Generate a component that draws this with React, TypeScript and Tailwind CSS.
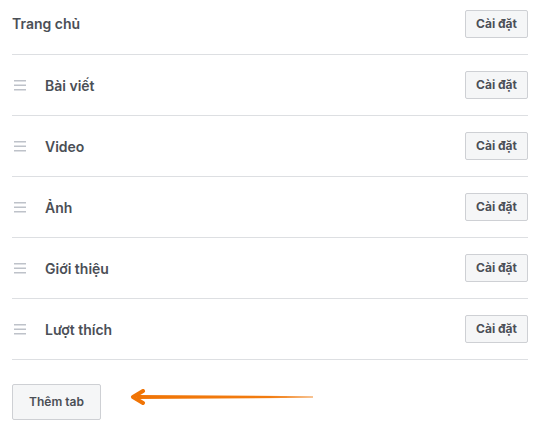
import React from "react";

// Tab list row with a settings button on the right
interface TabRowProps {
  label: string;
  draggable?: boolean;
  first?: boolean;
}

const DragHandle: React.FC = () => (
  <svg width="12" height="11" viewBox="0 0 12 11" className="shrink-0">
    <rect x="0" y="0" width="12" height="1.5" fill="#bec2c9" />
    <rect x="0" y="4.5" width="12" height="1.5" fill="#bec2c9" />
    <rect x="0" y="9" width="12" height="1.5" fill="#bec2c9" />
  </svg>
);

const TabRow: React.FC<TabRowProps> = ({ label, draggable = true, first }) => (
  <div
    className={`flex items-center justify-between border-b border-[#dddfe2] ${
      first ? "h-[55px] pb-[7px]" : "h-[61px]"
    }`}
  >
    <div className="flex items-center">
      {draggable && (
        <span className="ml-[2px] mr-[19px] flex">
          <DragHandle />
        </span>
      )}
      <span className="text-[14px] font-semibold text-[#4b4f56]">{label}</span>
    </div>
    <button className="h-[28px] w-[63px] rounded-[2px] border border-[#ced0d4] bg-[#f5f6f7] text-[12px] font-bold text-[#4b4f56]">
      Cài đặt
    </button>
  </div>
);

const tabs = ["Bài viết", "Video", "Ảnh", "Giới thiệu", "Lượt thích"];

export default function App() {
  return (
    <div
      className="h-[428px] w-[540px] overflow-hidden bg-white pl-[12px] pr-[12px]"
      style={{ fontFamily: "Inter, Arial, sans-serif" }}
    >
      <TabRow label="Trang chủ" draggable={false} first />
      {tabs.map((t) => (
        <TabRow key={t} label={t} />
      ))}
      <div className="mt-[24px] flex items-start">
        <button className="h-[36px] w-[89px] rounded-[2px] border border-[#ced0d4] bg-[#f5f6f7] text-[12px] font-semibold text-[#4b4f56]">
          Thêm tab
        </button>
        <svg width="190" height="16" viewBox="0 0 190 16" className="ml-[28px] mt-[5px]">
          <defs>
            <linearGradient id="shaft" x1="0" x2="1" y1="0" y2="0">
              <stop offset="0" stopColor="#f07405" />
              <stop offset="0.75" stopColor="#f27c10" />
              <stop offset="1" stopColor="#f5b070" />
            </linearGradient>
          </defs>
          <polygon points="8,6 184,7.2 184,8.8 8,10" fill="url(#shaft)" />
          <path
            d="M14 2 L4 8 L14 14"
            fill="none"
            stroke="#f07405"
            strokeWidth="4"
            strokeLinecap="round"
            strokeLinejoin="round"
          />
        </svg>
      </div>
    </div>
  );
}
